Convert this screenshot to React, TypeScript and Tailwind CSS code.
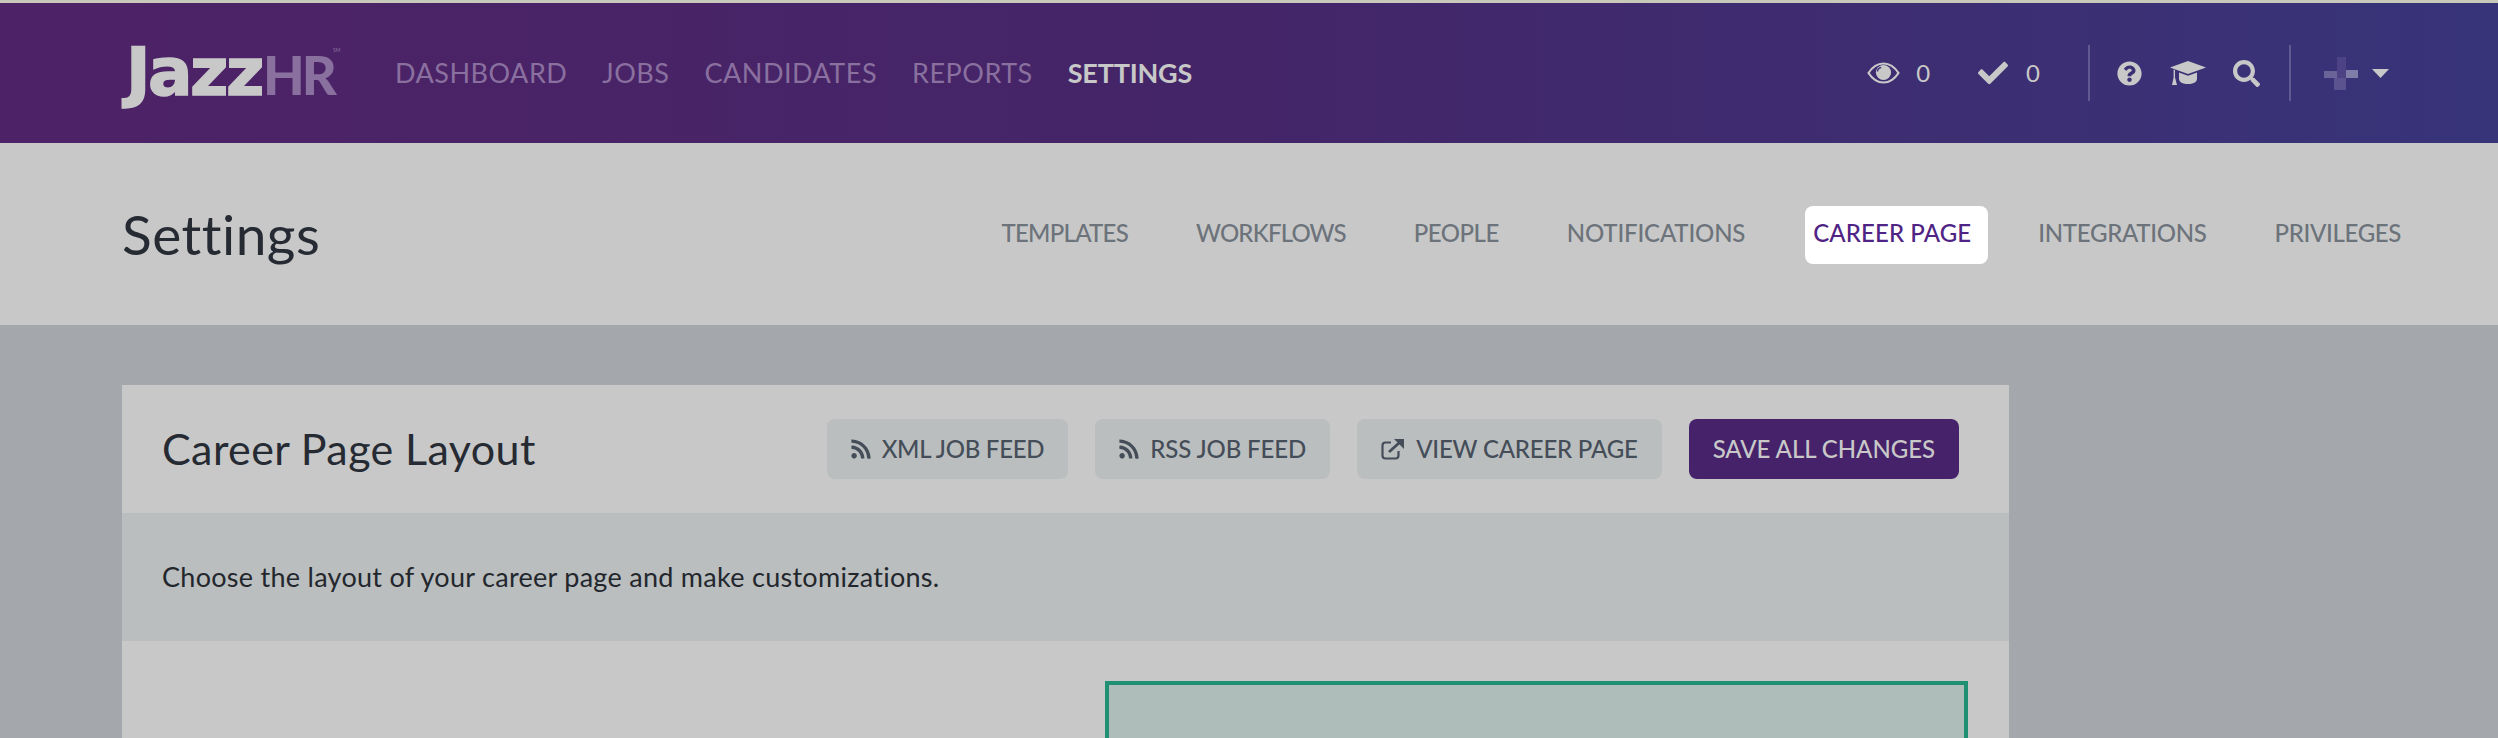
import React from "react";
import { FaCheck, FaQuestionCircle, FaRss, FaSearch } from "react-icons/fa";

const font = "[font-family:Lato,'Open_Sans',sans-serif]";

export default function App() {
  return (
    <div className={`h-[738px] overflow-hidden bg-[#a4a7ab] ${font}`}>
      <div className="h-[3px] bg-[#c8c8bb]" />
      <header className="h-[140px] pl-[122px] flex items-center bg-gradient-to-r from-[#4e2266] via-[#432568] to-[#37347a] text-[27px]">
        <div className="relative w-[273px] pl-1 flex items-baseline font-bold leading-none">
          <span className="text-[66px] tracking-[-2.5px] text-[#c8c8c8] [-webkit-text-stroke:1.5px_#c8c8c8] [font-family:'DejaVu_Sans',sans-serif]">Jazz</span>
          <span className="ml-px text-[54px] font-black tracking-[-3px] text-[#8a709f]">HR</span>
          <span className="absolute left-[211px] top-[8px] text-[5px] font-normal text-[#8a709f]">SM</span>
        </div>
        <nav className="flex gap-[35px] tracking-[0.5px] text-[#8a709f]">
          <span>DASHBOARD</span>
          <span>JOBS</span>
          <span>CANDIDATES</span>
          <span>REPORTS</span>
          <span className="text-[#c8c8c8] font-bold tracking-[-0.2px]">SETTINGS</span>
        </nav>
        <div className="ml-auto pr-[109px] flex items-center text-[#c8c8c8] text-[24px]">
          <svg className="w-[33px] h-[22px]" viewBox="0 0 33 22">
            <path d="M1.5 11C6 4 11 1.5 16.5 1.5S27 4 31.5 11C27 18 22 20.5 16.5 20.5S6 18 1.5 11z" fill="none" stroke="currentColor" strokeWidth="2.2" />
            <circle cx="16.5" cy="10.5" r="7.6" fill="currentColor" />
            <path d="M10.5 9.5c.2-2.2 1.6-3.7 3.7-4" fill="none" stroke="#3d3176" strokeWidth="1.4" />
          </svg>
          <span className="ml-4">0</span>
          <FaCheck className="ml-[48px] w-[30px] h-[30px]" />
          <span className="ml-[18px]">0</span>
          <div className="ml-[48px] w-[2px] h-14 bg-[#5f5a92]" />
          <FaQuestionCircle className="ml-[27px] w-[25px] h-[25px]" />
          <svg className="ml-7 w-9 h-6" viewBox="0 0 36 24" fill="currentColor">
            <path d="M0 6.5 18 0l18 6.5L18 13z" />
            <path d="M3.6 8.5 5 9v7.5L7 24H2l1.6-7.5z" />
            <path d="M9 11.5l9 3.3 9-3.3V18c0 3-4 5-9 5s-9-2-9-5z" />
          </svg>
          <FaSearch className="ml-[27px] w-[27px] h-[27px]" />
          <div className="ml-[29px] w-[2px] h-14 bg-[#5f5a92]" />
          <svg className="ml-[33px] w-[34px] h-[33px]" viewBox="0 0 34 33">
            <rect x="13" y="0" width="9" height="21" fill="#4d4384" />
            <rect x="0" y="14" width="13" height="7" fill="#6a6499" />
            <rect x="22" y="13" width="12" height="8" fill="#807da9" />
            <rect x="10" y="21" width="12" height="12" fill="#5b5290" />
          </svg>
          <svg className="ml-[14px] w-[17px] h-[9px]" viewBox="0 0 17 9"><path d="M0 0h17L8.5 9z" fill="#c8c8c8" /></svg>
        </div>
      </header>
      <section className="h-[182px] pl-[122px] pr-[97px] bg-[#c8c8c8] flex items-center justify-between">
        <h1 className="text-[55px] tracking-[0.5px] text-[#262b33]">Settings</h1>
        <nav className="flex items-center gap-[68px] text-[24px] font-medium text-[#6c737b] -mt-[2px]">
          <span className="tracking-[-0.72px]">TEMPLATES</span>
          <span className="tracking-[-0.82px]">WORKFLOWS</span>
          <span className="tracking-[-0.5px]">PEOPLE</span>
          <span className="tracking-[-0.18px]">NOTIFICATIONS</span>
          <span className="-ml-2 -mr-[18px] mt-1 h-[58px] bg-white rounded-lg pl-2 pr-[17px] pb-1 flex items-center tracking-[0.1px] text-[#4f2485]">CAREER PAGE</span>
          <span className="tracking-[-0.3px]">INTEGRATIONS</span>
          <span className="tracking-[-0.35px]">PRIVILEGES</span>
        </nav>
      </section>
      <main className="pt-[60px] pl-[122px]">
        <div className="w-[1887px] bg-[#c8c8c8]">
          <div className="h-[128px] pl-10 pr-[50px] flex items-center justify-between">
            <h2 className="text-[43px] tracking-[0.4px] text-[#262b33]">Career Page Layout</h2>
            <div className="flex gap-[27px] text-[24px] font-medium">
              <button className="h-[60px] px-6 rounded-lg bg-[#babebe] flex items-center gap-[11px] tracking-[-0.25px] text-[#454d59]">
                <FaRss className="w-5 h-[22px]" />
                XML JOB FEED
              </button>
              <button className="h-[60px] px-6 rounded-lg bg-[#babebe] flex items-center gap-[11px] tracking-[-0.12px] text-[#454d59]">
                <FaRss className="w-5 h-[22px]" />
                RSS JOB FEED
              </button>
              <button className="h-[60px] px-6 rounded-lg bg-[#babebe] flex items-center gap-3 tracking-[-0.2px] text-[#454d59]">
                <svg className="w-[23px] h-[21px]" viewBox="0 0 23 21">
                  <path d="M10 3.5H4.5a3 3 0 0 0-3 3v10a3 3 0 0 0 3 3h10a3 3 0 0 0 3-3V12" fill="none" stroke="currentColor" strokeWidth="2.2" />
                  <path d="M8 13 18 4" fill="none" stroke="currentColor" strokeWidth="2.8" />
                  <path d="M13 0h10v10z" fill="currentColor" />
                </svg>
                VIEW CAREER PAGE
              </button>
              <button className="h-[60px] px-6 rounded-lg bg-[#45226a] tracking-[-0.05px] text-[#c8c8c8]">SAVE ALL CHANGES</button>
            </div>
          </div>
          <div className="h-[128px] pl-10 flex items-center bg-[#babebe] text-[27px] tracking-[0.28px] text-[#23272d]">
            Choose the layout of your career page and make customizations.
          </div>
          <div className="pt-10 pl-[983px] pr-[41px]">
            <div className="h-[200px] border-4 border-[#1f9071] bg-[#aebdb9]" />
          </div>
        </div>
      </main>
    </div>
  );
}
